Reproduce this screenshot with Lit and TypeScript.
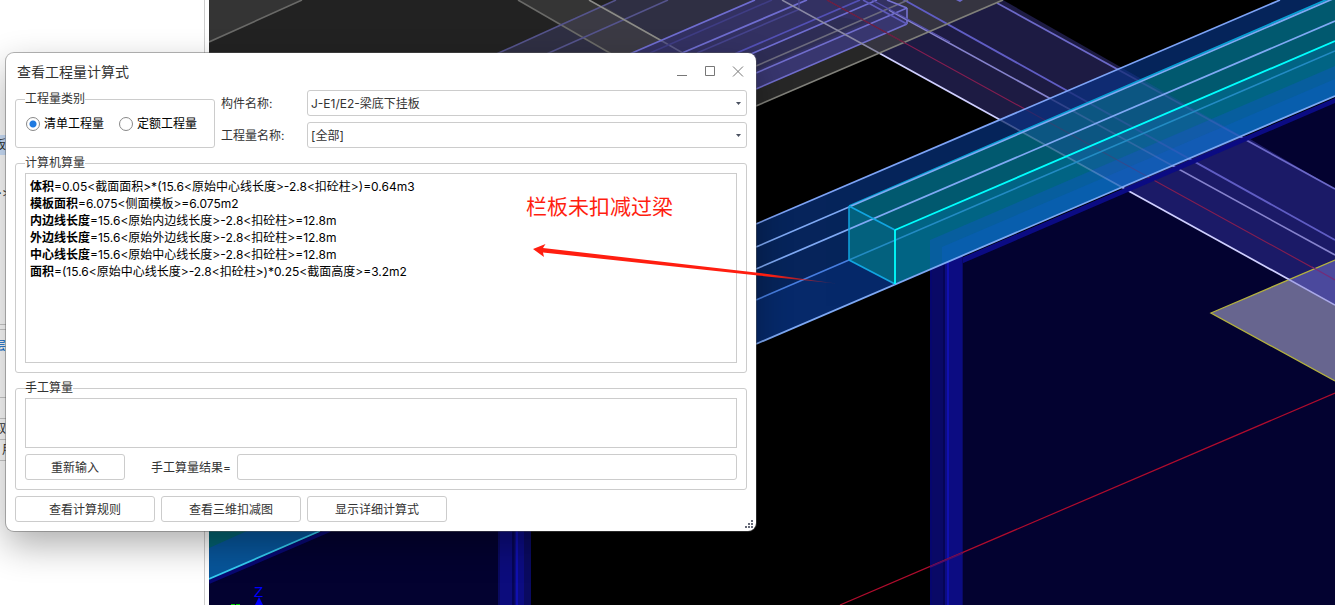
import { LitElement, html, css, svg } from "lit";
import { customElement, state } from "lit/decorators.js";

type Line = [number, number, number, number, string, number];

@customElement("model-scene")
class ModelScene extends LitElement {
  static styles = css`
    :host { display: block; overflow: hidden; background: #000; }
    svg { display: block; width: 100%; height: 100%; }
    .axis { font: 15px "Liberation Sans", sans-serif; fill: #00f; }
  `;

  private line([x1, y1, x2, y2, color, width]: Line) {
    return svg`<line x1=${x1} y1=${y1} x2=${x2} y2=${y2} stroke=${color} stroke-width=${width} />`;
  }

  render() {
    const slab: Line[] = [
      [209, 42, 302, 0, "#6a6a68", 1.6],
      [518, 0, 615, 56, "#6a6a68", 1.6],
      [492, 56, 616, 0, "#55548c", 1.6],
      [542, 56, 668, 0, "#55548c", 1.6],
      [589, 0, 662, 41, "#8c8c88", 1.6],
      [662, 41, 688, 56, "#5a5985", 1.6],
      [625, 56, 755, 0, "#6f6dd0", 1.8],
      [650, 53, 772, 0, "#3f3d84", 1.6],
      [675, 56, 807, 0, "#6f6dd0", 1.8],
      [697, 53, 800, 9, "#45438c", 1.6],
      [732, 55, 860, 0, "#5350b5", 1.8],
      [751, 54, 877, 0, "#6f6dd0", 1.6],
      [756, 66, 908, 0, "#6c6b7d", 1.6],
      [756, 73, 907, 8, "#706dcc", 1.6],
      [756, 89, 907, 24, "#706dcc", 1.6],
      [907, 8, 907, 24, "#7773d0", 1.6],
      [887, 0, 907, 8, "#7773d0", 1.6],
      [863, 0, 907, 24, "#5f5bbb", 1.6],
      [872, 0, 950, 42, "#5550aa", 1.4],
      [799, 0, 799, 9, "#4a478d", 1.4],
      [756, 106, 1003, 0, "#80807a", 1.7],
      [782, 0, 879, 53, "#8a89a4", 1.5],
    ];
    const cross: Line[] = [
      [997, 3, 1335, 189, "#6c69c8", 1.7],
      [872, -18, 1335, 240, "#605dc4", 1.8],
      [889, 10, 1335, 255, "#8683cd", 1.6],
      [827, 0, 1335, 280, "#861d50", 1.1],
      [879, 53, 1335, 305, "#cfcfff", 1.7],
    ];
    const beam: Line[] = [
      [756, 224, 1280, 0, "#7da3f6", 1.7],
      [849, 206, 1335, -4, "#079fd4", 1.8],
      [756, 247, 1335, -2, "#7fa9f4", 1.7],
      [756, 269, 1335, 21, "#7fa9f4", 1.7],
      [756, 300, 849, 260, "#477ee0", 1.6],
      [849, 260, 1335, 51, "#238bc3", 1.6],
      [209, 579, 320, 531, "#35cdf4", 1.8],
      [756, 344, 1335, 96, "#7da8f4", 1.8],
      [849, 206, 849, 260, "#12a5e0", 1.5],
      [849, 260, 895, 284, "#12a5e0", 1.8],
      [849, 206, 895, 230, "#12a5e0", 1.8],
      [895, 230, 895, 284, "#0ff", 1.8],
      [895, 230, 1335, 41, "#0ff", 1.9],
    ];
    return html`
      <svg viewBox="209 0 1126 605" preserveAspectRatio="xMinYMin slice" role="img" aria-label="三维模型">
        <defs>
          <clipPath id="beamArea"><polygon points="756,224 1280,0 1335,-24 1335,96 756,344" /></clipPath>
        </defs>
        <polygon points="209,0 1003,0 756,106 756,160 209,160" fill="#222" />
        <polygon points="756,106 1003,0 782,0 879,53" fill="#353440" />
        <polygon points="756,0 782,0 879,53 756,106" fill="#272727" />
        <polygon points="209,0 302,0 209,42" fill="#343434" />
        <polygon points="616,0 887,0 907,8 907,24 756,89 492,56" fill="#2f2f43" />
        <polygon points="518,0 589,0 616,15 562,25" fill="#353535" />
        <polygon points="560,24 604,6 688,56 615,56" fill="#3b3a44" />
        <polygon points="755,0 887,0 907,8 907,24 756,89 625,56" fill="#333162" />
        <polygon points="872,5 907,24 756,89 756,73 888,16" fill="#38366f" />
        <polygon points="756,53 840,17 866,22 756,70" fill="#2e2d55" />

        <polygon points="209,579 330,526 531,526 531,605 209,605" fill="#030230" />
        <polygon points="962,258 1335,98 1335,605 962,605" fill="#030230" />
        <polygon points="879,53 1003,0 1335,189 1335,305" fill="#1d1b43" />
        <polygon points="1124,188 1245,136 1335,189 1335,305" fill="#1b1a67" />
        ${cross.map((l) => this.line(l))}
        <polygon points="1211,313 1335,260 1335,381" fill="#67658f" />
        <polygon points="1288,280 1335,260 1335,305" fill="#4b499d" />
        <polyline points="1335,260 1211,313 1335,381" fill="none" stroke="#b4b13f" stroke-width="1.3" />
        ${this.line([1288, 279, 1335, 305, "#aaa9e8", 1.5])}
        ${this.line([1312, 267, 1335, 280, "#762b78", 1.1])}

        <polygon points="961,258 1335,98 1335,103 961,264" fill="#0b0b83" />
        <rect x="930" y="240" width="33" height="365" fill="#090966" />
        <rect x="930" y="240" width="2" height="365" fill="#06066f" />
        <rect x="943" y="240" width="2" height="365" fill="#050556" />
        <rect x="945" y="240" width="17" height="365" fill="#0c0c82" />
        <rect x="947" y="240" width="2" height="365" fill="#1010b0" />
        <rect x="498" y="526" width="33" height="79" fill="#0a0a60" />
        <rect x="500" y="526" width="12" height="79" fill="#0c0c7c" />
        <rect x="512" y="526" width="2" height="79" fill="#050556" />
        <rect x="515" y="526" width="9" height="79" fill="#0c0c82" />
        <rect x="516" y="526" width="2" height="79" fill="#1010b0" />
        ${this.line([840, 605, 1335, 393, "#b00c2d", 1.2])}
        ${this.line([930, 567, 963, 553, "#4d0d68", 1.5])}

        <polygon points="756,224 1280,0 1335,0 1335,51 756,300" fill="#06245b" />
        <polygon points="756,300 849,260 895,284 756,344" fill="#06296a" />
        <polygon points="849,206 1335,-4 1335,41 895,230" fill="#025970" />
        <polygon points="849,206 895,230 895,284 849,260" fill="#04617f" />
        <polygon points="895,230 1335,41 1335,96 895,284" fill="#026584" />
        <polygon points="930,240 1335,66 1335,96 930,269" fill="#085f9e" />
        <polygon points="942,247 1335,79 1335,96 942,264" fill="#095fae" />
        <g clip-path="url(#beamArea)">
          <polygon points="879,53 1003,0 1335,189 1335,305" fill="#3b52d0" fill-opacity="0.2" />
          <g opacity="0.28">${cross.map((l) => this.line(l))}</g>
        </g>
        ${slab.map((l) => this.line(l))}
        ${this.line([827, 0, 905, 43, "#682040", 1.1])}
        <polygon points="956,0 963,0 960,2" fill="#6c69c8" />

        <polygon points="209,531 320,531 209,579" fill="#07559a" />
        <polygon points="209,531 247,531 209,548" fill="#03616f" />
        ${this.line([209, 582, 330, 530, "#080872", 4])}
        ${beam.map((l) => this.line(l))}

        <text class="axis" x="254" y="597">Z</text>
        <polygon points="259,597 263,605 255,605" fill="#00f" />
        <path d="M231 604.500h4M236 604.500h4" stroke="#0c0" stroke-width="1" />
      </svg>
    `;
  }
}

@customElement("app-root")
class AppRoot extends LitElement {
  static styles = css`
    :host {
      display: grid;
      grid-template-columns: 205px 1fr;
      column-gap: 4px;
      position: relative;
      height: 100vh;
      overflow: hidden;
      background: #fff;
      color: #333;
      font: 12px/18px Inter, "Noto Sans CJK SC", sans-serif;
    }
    * { box-sizing: border-box; }
    button, input, select, textarea { font: inherit; color: inherit; margin: 0; }

    .panel {
      border-right: 1px solid #ccc;
      display: grid;
      grid-template-rows: 135px 20px 28px 21px 120px 5px 68px 21px 21px 21px 1px;
      overflow: hidden;
      align-content: start;
    }
    .panel div { text-indent: -6px; line-height: 20px; white-space: nowrap; }
    .panel .selected { background: #cfe4ff; }
    .panel .ruled { border-top: 1px solid #ccc; }
    .panel .group { padding-top: 6px; color: #06c; }
    .panel .inset { text-indent: 2px; }

    .dialog {
      position: absolute;
      left: 6px;
      top: 53px;
      width: 750px;
      padding: 0 9px 9px;
      display: flex;
      flex-direction: column;
      gap: 6px;
      background: #fff;
      border-radius: 8px;
      box-shadow: 0 0 0 1px rgba(90, 90, 90, 0.45), 0 14px 36px rgba(0, 0, 0, 0.32);
    }
    header { display: flex; align-items: center; justify-content: space-between; height: 31px; padding: 6px 0 0 2px; }
    h1 { margin: 0; font-size: 14px; font-weight: 400; line-height: 24px; }
    .controls { display: flex; margin-right: -5px; }
    .controls button { width: 28px; height: 24px; padding: 0; border: 0; background: none; display: grid; place-items: center; }
    .controls svg { width: 12px; height: 12px; fill: none; stroke: #777; }

    .top { display: grid; grid-template-columns: 200px 80px 1fr; gap: 6px; }
    .top fieldset { grid-row: span 2; }
    .top > label { line-height: 26px; padding-top: 1px; height: 26px; }
    fieldset { margin: 0; padding: 1px 9px 9px; border: 1px solid #ccc; border-radius: 3px; min-width: 0; }
    legend { padding: 0; }
    .radios { display: flex; gap: 15px; padding: 6px 0 0 1px; color: #000; }
    .radios label { display: flex; align-items: center; gap: 4px; }
    input[type="radio"] {
      appearance: none;
      width: 14px;
      height: 14px;
      border: 1px solid #888;
      border-radius: 50%;
      background: #fff;
    }
    input[type="radio"]:checked { background: radial-gradient(circle, #1f7ae0 3px, #fff 4px); }

    .select { display: grid; align-items: center; }
    .select > * { grid-area: 1 / 1; }
    .select svg { justify-self: end; width: 5px; height: 3px; margin-right: 6px; fill: #4a5160; pointer-events: none; }
    select {
      appearance: none;
      width: 100%;
      height: 26px;
      padding: 2px 20px 0 3px;
      border: 1px solid #ccc;
      border-radius: 3px;
      background: #fff;
    }
    .results { height: 190px; padding: 4px; border: 1px solid #ccc; color: #000; line-height: 17px; white-space: nowrap; overflow: auto; }
    .results p { margin: 0; }
    textarea { display: block; width: 100%; height: 50px; padding: 4px; resize: none; border: 1px solid #ccc; border-radius: 0; background: #fff; }
    .manual { display: flex; align-items: center; margin-top: 6px; }
    .manual label { margin: 0 6px 0 26px; padding-top: 2px; }
    .manual input { flex: 1; min-width: 0; height: 26px; border: 1px solid #ccc; border-radius: 3px; background: #fff; }
    .btn { height: 26px; padding: 2px 0 0; border: 1px solid #ccc; border-radius: 3px; background: #fff; width: 140px; }
    .btn.small { width: 100px; }
    footer { display: flex; gap: 6px; }
    .grip { position: absolute; right: 3px; bottom: 3px; width: 8px; height: 8px; fill: #666a78; }

    .note { position: absolute; left: 526px; top: 192px; margin: 0; font-size: 21px; line-height: 30px; color: #ff1e10; }
    .arrow { position: absolute; left: 530px; top: 240px; width: 310px; height: 50px; pointer-events: none; }
  `;

  @state() private kind = "list";

  private rows = [
    ["体积", "=0.05<截面面积>*(15.6<原始中心线长度>-2.8<扣砼柱>)=0.64m3"],
    ["模板面积", "=6.075<侧面模板>=6.075m2"],
    ["内边线长度", "=15.6<原始内边线长度>-2.8<扣砼柱>=12.8m"],
    ["外边线长度", "=15.6<原始外边线长度>-2.8<扣砼柱>=12.8m"],
    ["中心线长度", "=15.6<原始中心线长度>-2.8<扣砼柱>=12.8m"],
    ["面积", "=(15.6<原始中心线长度>-2.8<扣砼柱>)*0.25<截面高度>=3.2m2"],
  ];

  private radio(value: string, text: string) {
    return html`<label><input type="radio" name="kind" .checked=${this.kind === value}
      @change=${() => (this.kind = value)} />${text}</label>`;
  }

  private select(id: string, text: string) {
    return html`<div class="select">
      <select id=${id}><option>${text}</option></select>
      <svg viewBox="0 0 5 3" aria-hidden="true"><path d="M0 0h5L2.5 3z" /></svg>
    </div>`;
  }

  render() {
    return html`
      <aside class="panel">
        <div></div>
        <div class="selected">板</div>
        <div></div>
        <div>&gt;&gt;</div>
        <div></div>
        <div class="ruled"></div>
        <div class="ruled group">层</div>
        <div class="ruled"></div>
        <div class="ruled">取</div>
        <div class="ruled inset">用</div>
        <div class="ruled"></div>
      </aside>
      <model-scene></model-scene>

      <section class="dialog" role="dialog" aria-labelledby="title">
        <header>
          <h1 id="title">查看工程量计算式</h1>
          <div class="controls">
            <button aria-label="最小化"><svg viewBox="0 0 12 12"><path d="M1 9.5h10" /></svg></button>
            <button aria-label="最大化"><svg viewBox="0 0 12 12"><path d="M1.500 .5h9v9h-9z" /></svg></button>
            <button aria-label="关闭"><svg viewBox="0 0 12 12"><path d="M1 .5l10 10M11 .5L1 10.500" /></svg></button>
          </div>
        </header>
        <div class="top">
          <fieldset>
            <legend>工程量类别</legend>
            <div class="radios">${this.radio("list", "清单工程量")}${this.radio("quota", "定额工程量")}</div>
          </fieldset>
          <label for="part">构件名称:</label>
          ${this.select("part", "J-E1/E2-梁底下挂板")}
          <label for="quantity">工程量名称:</label>
          ${this.select("quantity", "[全部]")}
        </div>
        <fieldset>
          <legend>计算机算量</legend>
          <div class="results">${this.rows.map(([name, formula]) => html`<p><b>${name}</b>${formula}</p>`)}</div>
        </fieldset>
        <fieldset>
          <legend>手工算量</legend>
          <textarea aria-label="手工算量"></textarea>
          <div class="manual">
            <button class="btn small">重新输入</button>
            <label for="result">手工算量结果=</label>
            <input id="result" type="text" />
          </div>
        </fieldset>
        <footer>
          <button class="btn">查看计算规则</button>
          <button class="btn">查看三维扣减图</button>
          <button class="btn">显示详细计算式</button>
        </footer>
        <svg class="grip" viewBox="0 0 8 8" aria-hidden="true">
          <path d="M6 0h2v2h-2zM3 3h2v2h-2zM6 3h2v2h-2zM0 6h2v2h-2zM3 6h2v2h-2zM6 6h2v2h-2z" />
        </svg>
      </section>

      <p class="note">栏板未扣减过梁</p>
      <svg class="arrow" viewBox="530 240 310 50" aria-hidden="true">
        <defs>
          <linearGradient id="fade" gradientUnits="userSpaceOnUse" x1="770" y1="0" x2="836" y2="0">
            <stop offset="0" stop-color="#ff1e10" /><stop offset="1" stop-color="#ff1e10" stop-opacity="0.2" />
          </linearGradient>
        </defs>
        <path d="M533 249L545.500 244L543 248L760 273L836 283.500L758 275.500L543 252.500L544 257z" fill="url(#fade)" />
      </svg>
    `;
  }
}
